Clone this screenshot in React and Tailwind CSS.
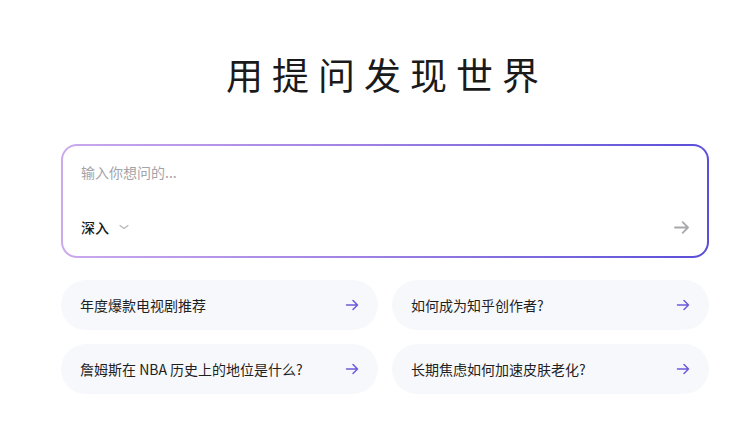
import React from "react";

const font = { fontFamily: "'Noto Sans CJK SC', 'Noto Sans', sans-serif" };

const suggestions = [
  "年度爆款电视剧推荐",
  "如何成为知乎创作者?",
  "詹姆斯在 NBA 历史上的地位是什么?",
  "长期焦虑如何加速皮肤老化?",
];

const Arrow = ({ className }) => (
  <svg viewBox="0 0 16 16" className={className} fill="none" stroke="currentColor" strokeWidth="1.5" strokeLinecap="round" strokeLinejoin="round">
    <path d="M2.5 8h11M9 3.5 13.5 8 9 12.5" />
  </svg>
);

export default function App() {
  return (
    <div className="min-h-screen bg-white" style={font}>
      <div className="ml-[61px] w-[648px] pt-[48px]">
        <h1 className="text-center text-[37px] leading-[52px] tracking-[9px] pl-[4px] text-[#1a1a1a] font-normal">用提问发现世界</h1>

        <div className="mt-[44px] rounded-[16px] p-[2px] bg-gradient-to-r from-[#cba9ee] via-[#9b7ee2] to-[#5a4ed8]">
          <div className="rounded-[14px] bg-white h-[110px] px-[18px] pt-[16px] pb-[19px] flex flex-col justify-between">
            <div className="text-[14px] leading-[20px] text-[#a3a3a8]">输入你想问的...</div>
            <div className="flex items-center justify-between">
              <div className="flex items-center gap-[10px]">
                <span className="text-[14px] leading-[20px] font-medium text-[#1a1a1a]">深入</span>
                <svg viewBox="0 0 10 6" className="w-[10px] h-[6px] text-[#b5b5ba]" fill="none" stroke="currentColor" strokeWidth="1.2" strokeLinecap="round">
                  <path d="M1 1.5 5 4.5 9 1.5" />
                </svg>
              </div>
              <Arrow className="w-[19px] h-[19px] text-[#a8a8ad] -mr-[2px]" />
            </div>
          </div>
        </div>

        <div className="mt-[22px] grid grid-cols-2 gap-x-[14px] gap-y-[14px]">
          {suggestions.map((s, i) => (
            <div key={i} className="h-[50px] rounded-full bg-[#f7f8fc] flex items-center justify-between pl-[19px] pr-[18px]">
              <span className="text-[14px] text-[#1f1f1f]">{s}</span>
              <Arrow className="w-[16px] h-[16px] text-[#6b5bdc]" />
            </div>
          ))}
        </div>
      </div>
    </div>
  );
}
